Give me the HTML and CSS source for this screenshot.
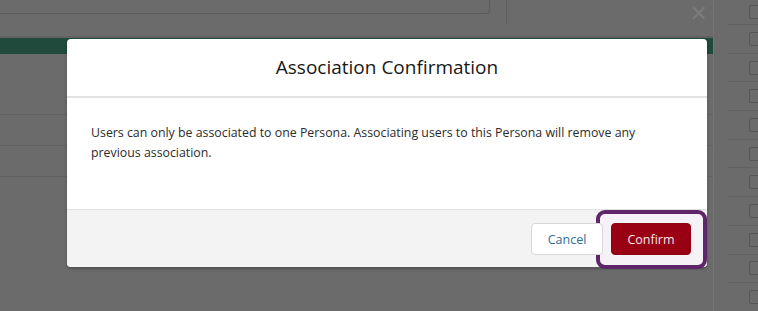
FILE: index.html
```html
<!DOCTYPE html>
<html>
<head>
<meta charset="utf-8">
<link rel="stylesheet" href="styles.css">
</head>
<body>
<div class="page">
  <div class="main">
    <div class="topbar">
      <div class="search"></div>
      <div class="divider"></div>
      <div class="spacer"></div>
      <div class="close">&#x2715;</div>
    </div>
    <div class="greenbar"></div>
    <div class="rows">
      <div class="row tall"></div>
      <div class="row"></div>
      <div class="row"></div>
    </div>
  </div>
  <div class="side">
    <div class="srow first"><span class="cb"></span></div>
    <div class="srow"><span class="cb"></span></div>
    <div class="srow"><span class="cb"></span></div>
    <div class="srow"><span class="cb"></span></div>
    <div class="srow"><span class="cb"></span></div>
    <div class="srow"><span class="cb"></span></div>
    <div class="srow"><span class="cb"></span></div>
    <div class="srow"><span class="cb"></span></div>
    <div class="srow"><span class="cb"></span></div>
    <div class="srow"><span class="cb"></span></div>
    <div class="srow"><span class="cb"></span></div>
  </div>
</div>

<div class="modal">
  <header class="modal-header">
    <h2>Association Confirmation</h2>
  </header>
  <div class="modal-body">
    <p>Users can only be associated to one Persona. Associating users to this Persona will remove any previous association.</p>
  </div>
  <footer class="modal-footer">
    <div class="highlight"></div>
    <button class="btn btn-neutral">Cancel</button>
    <button class="btn btn-brand">Confirm</button>
  </footer>
</div>
</body>
</html>
```

FILE: styles.css
```css
* { box-sizing: border-box; }
html, body {
  margin: 0;
  padding: 0;
  width: 758px;
  height: 311px;
  overflow: hidden;
  background: #6b6b6b;
  font-family: "Open Sans", "Noto Sans", sans-serif;
}
.page {
  display: flex;
  width: 758px;
  height: 311px;
}
.main {
  width: 713px;
  display: flex;
  flex-direction: column;
}
.topbar {
  height: 38px;
  display: flex;
  align-items: flex-start;
  border-bottom: 2px solid #616161;
}
.search {
  width: 490px;
  height: 14px;
  border: 1px solid #5c5c5c;
  border-top: none;
  border-left: none;
  border-bottom-right-radius: 4px;
}
.divider {
  width: 1px;
  height: 25px;
  margin-left: 16px;
  background: #5f5f5f;
}
.spacer { flex: 1; }
.close {
  color: #7b7b7b;
  font-size: 22px;
  line-height: 22px;
  margin-top: 3px;
  margin-right: 5px;
  font-family: "DejaVu Sans", sans-serif;
}
.greenbar {
  height: 16px;
  background: #1f4a3c;
}
.rows { display: flex; flex-direction: column; }
.row { height: 31px; border-bottom: 1px solid #626262; }
.row.tall { height: 61px; }

.side {
  width: 45px;
  border-left: 1px solid #757575;
  display: flex;
  flex-direction: column;
  padding-top: 0;
}
.srow {
  height: 28.7px;
  border-bottom: 1px solid #626262;
  margin-left: 14px;
  display: flex;
  align-items: center;
  padding-left: 21px;
  flex-shrink: 0;
}
.srow.first { height: 25px; }
.cb {
  width: 14px;
  height: 14px;
  border: 1px solid #575757;
  border-radius: 2px;
  flex-shrink: 0;
}

.modal {
  position: absolute;
  left: 67px;
  top: 39px;
  width: 640px;
  border-radius: 4px;
  background: #fff;
  box-shadow: 0 2px 3px rgba(0,0,0,0.25);
}
.modal-header {
  height: 59px;
  border-bottom: 2px solid #e2e2e2;
  display: flex;
  align-items: center;
  justify-content: center;
  border-radius: 4px 4px 0 0;
}
.modal-header h2 {
  margin: 0;
  font-size: 19px;
  font-weight: 400;
  color: #181818;
  padding-bottom: 1px;
}
.modal-body {
  height: 111px;
  padding: 25px 24px 0 24px;
}
.modal-body p {
  margin: 0;
  font-size: 12.35px;
  line-height: 20px;
  color: #2b2b2b;
}
.modal-footer {
  position: relative;
  height: 58px;
  background: #f3f3f3;
  border-top: 1px solid #e0e0e0;
  border-radius: 0 0 4px 4px;
  display: flex;
  justify-content: flex-end;
  align-items: flex-start;
  gap: 8px;
  padding: 13px 16px 0 0;
}
.highlight {
  position: absolute;
  left: 529px;
  top: 0;
  width: 111px;
  height: 59px;
  border: 4px solid #5e2568;
  border-radius: 9px;
  background: #f6f1f7;
}
.btn {
  position: relative;
  height: 32px;
  border-radius: 4px;
  font-family: "Open Sans", "Noto Sans", sans-serif;
  font-size: 12.5px;
  padding: 0;
}
.btn-neutral {
  width: 72px;
  background: #fff;
  border: 1px solid #d8d8d8;
  color: #2f6e94;
}
.btn-brand {
  width: 80px;
  background: #990014;
  border: 1px solid #8c0012;
  color: #fbe5e8;
}
```
